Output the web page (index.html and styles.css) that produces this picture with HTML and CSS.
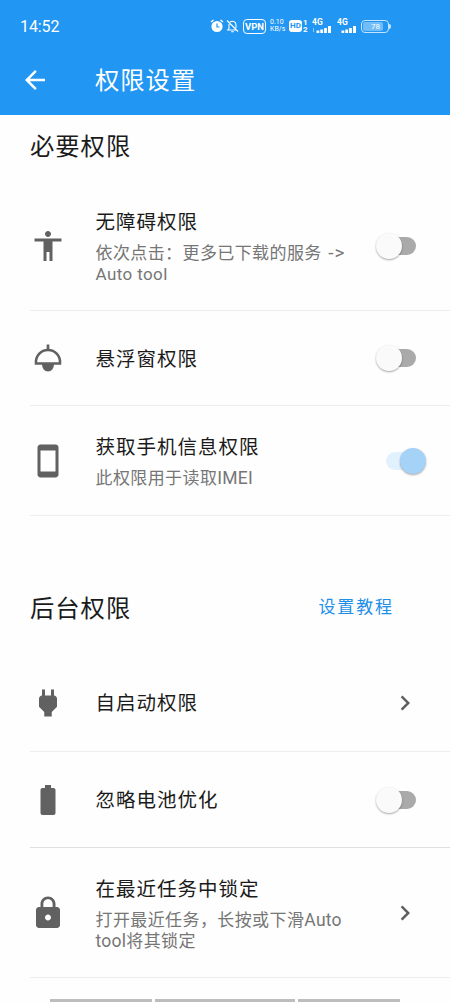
FILE: index.html
```html
<!DOCTYPE html>
<html lang="zh-CN">
<head>
<meta charset="utf-8">
<title>权限设置</title>
<link rel="stylesheet" href="styles.css">
</head>
<body>
<header class="header">
  <div class="status">
    <span class="clock">14:52</span>
    <div class="indicators">
      <svg class="alarm" width="14" height="14" viewBox="0 0 14 14"><circle cx="7" cy="7.500" r="5.600" fill="#fff"/><path d="M1 3 3.500 1M13 3 10.500 1" stroke="#fff" stroke-width="1.400"/><path d="M7 4.500v3.500h2.600" fill="none" stroke="#2196f3" stroke-width="1.200"/></svg>
      <svg class="mute" width="13" height="14" viewBox="0 0 13 14" fill="none" stroke="#fff" stroke-width="1.100"><path d="M4 3.200C6 1.300 10 2.500 10 6v3M3 5v4.500L1.800 11h8.400M5.200 12.700h2.600M1 1.500l11 11"/></svg>
      <span class="vpn">VPN</span>
      <span class="speed"><span>0.10</span><span>KB/s</span></span>
      <span class="hd">HD</span>
      <span class="sims"><span>1</span><span>2</span></span>
      <span class="signal"><span class="gen">4G</span><svg width="20" height="8" viewBox="0 0 20 8" fill="#fff"><path d="M4.500 5.500h2.800V8H4.500zM8.300 4.500h2.800V8H8.300zM12.100 3h2.800v5h-2.800zM16 1h3v7H16z"/><path d="M1.500 3v4" stroke="#8ac8f9"/></svg></span>
      <span class="signal second"><span class="gen">4G</span><svg width="20" height="8" viewBox="0 0 20 8" fill="#fff"><path d="M4.500 5.500h2.800V8H4.500zM8.300 4.500h2.800V8H8.300zM12.100 3h2.800v5h-2.800zM16 1h3v7H16z"/></svg></span>
      <span class="battery"><span class="charge">78</span></span><i class="tip"></i>
    </div>
  </div>
  <div class="appbar">
    <svg class="back" width="30" height="30" viewBox="0 0 24 24" fill="#fff"><path d="M20 11H7.830l5.590-5.590L12 4l-8 8 8 8 1.410-1.410L7.830 13H20v-2z"/></svg>
    <h1 class="heading">权限设置</h1>
  </div>
</header>
<main>
  <section class="required">
    <div class="section-head"><h2 class="heading">必要权限</h2></div>
    <div class="row r1">
      <svg class="icon" viewBox="0 0 24 24"><path d="M12 2c1.100 0 2 .9 2 2s-.9 2-2 2-2-.9-2-2 .9-2 2-2zm9 7h-6v13h-2v-6h-2v6H9V9H3V7h18v2z"/></svg>
      <div class="copy"><div class="title">无障碍权限</div><div class="sub">依次点击：更多已下载的服务 <span class="arrow">-&gt;</span><br>Auto tool</div></div>
      <span class="switch"><i class="knob"></i></span>
    </div>
    <div class="row r2">
      <svg class="icon" viewBox="0 0 24 24"><path d="M11.100 3h1.800v3.200h-1.800z"/><path d="M4 15.600C3.600 10.500 7.200 6.600 12 6.600s8.400 3.900 8 9z" fill="none" stroke="#616161" stroke-width="1.700"/><path d="M8 16h8c0 3-1.700 5-4 5s-4-2-4-5z"/></svg>
      <div class="copy"><div class="title">悬浮窗权限</div></div>
      <span class="switch"><i class="knob"></i></span>
    </div>
    <div class="row r3">
      <svg class="icon" viewBox="0 0 24 24"><path d="M17 1.010 7 1c-1.100 0-2 .9-2 2v18c0 1.100.9 2 2 2h10c1.100 0 2-.9 2-2V3c0-1.100-.9-1.990-2-1.990zM17 19H7V5h10v14z"/></svg>
      <div class="copy"><div class="title">获取手机信息权限</div><div class="sub">此权限用于读取<span class="latin">IMEI</span></div></div>
      <span class="switch on"><i class="knob"></i></span>
    </div>
  </section>
  <section class="background">
    <div class="section-head tall"><h2 class="heading">后台权限</h2><a class="guide">设置教程</a></div>
    <div class="row r4">
      <svg class="icon" viewBox="0 0 24 24"><path d="M16.010 7 16 3h-2v4h-4V3H8v4h-.01C7 6.990 6 7.990 6 8.990v5.490L9.500 18v3h5v-3l3.500-3.510v-5.500c0-1-1-2-1.990-1.990z"/></svg>
      <div class="copy"><div class="title">自启动权限</div></div>
      <svg class="chevron" viewBox="0 0 24 24"><path d="M10 6 8.590 7.410 13.170 12l-4.580 4.590L10 18l6-6z"/></svg>
    </div>
    <div class="row r5">
      <svg class="icon" viewBox="0 0 24 24"><path d="M15.670 4H14V2h-4v2H8.330C7.600 4 7 4.600 7 5.330v15.330C7 21.400 7.600 22 8.330 22h7.330c.74 0 1.340-.6 1.340-1.330V5.330C17 4.600 16.400 4 15.670 4z"/></svg>
      <div class="copy"><div class="title">忽略电池优化</div></div>
      <span class="switch"><i class="knob"></i></span>
    </div>
    <div class="row r6">
      <svg class="icon" viewBox="0 0 24 24"><path d="M18 8h-1V6c0-2.760-2.240-5-5-5S7 3.240 7 6v2H6c-1.100 0-2 .9-2 2v10c0 1.100.9 2 2 2h12c1.100 0 2-.9 2-2V10c0-1.100-.9-2-2-2zm-6 9c-1.100 0-2-.9-2-2s.9-2 2-2 2 .9 2 2-.9 2-2 2zm3.100-9H8.900V6c0-1.710 1.390-3.100 3.100-3.100s3.100 1.390 3.100 3.100v2z"/></svg>
      <div class="copy"><div class="title">在最近任务中锁定</div><div class="sub">打开最近任务，长按或下滑<span class="latin">Auto</span><br><span class="latin">tool</span>将其锁定</div></div>
      <svg class="chevron" viewBox="0 0 24 24"><path d="M10 6 8.590 7.410 13.170 12l-4.580 4.590L10 18l6-6z"/></svg>
    </div>
  </section>
</main>
<footer class="gesture"><i></i><i></i><i></i></footer>
</body>
</html>
```

FILE: styles.css
```css
* { box-sizing: border-box; }
body {
  margin: 0;
  width: 450px;
  height: 1003px;
  overflow: hidden;
  background: #fefefe;
  color: #1b1b1b;
  font-family: Roboto, "Noto Sans CJK SC", sans-serif;
  display: flex;
  flex-direction: column;
}
.header { height: 115px; flex: none; background: #2196f3; color: #fff; }
.status { height: 50px; padding: 2px 59px 0 20px; display: flex; align-items: center; justify-content: space-between; }
.clock { font-size: 16px; letter-spacing: -.1px; }
.indicators { display: flex; align-items: center; height: 18px; }
.alarm { margin-right: 2px; }
.mute { margin-right: 4px; }
.vpn { width: 23px; height: 15px; border: 1.500px solid #fff; border-radius: 4px; font: bold 9.500px/13px Roboto, sans-serif; display: flex; justify-content: center; }
.speed { width: 16px; margin-left: 4px; display: flex; flex-direction: column; font-size: 7px; line-height: 7px; white-space: nowrap; }
.hd { width: 13px; height: 12px; margin-left: 3px; border-radius: 3px; background: #fff; color: #2196f3; font-weight: bold; font-size: 8px; line-height: 12px; text-align: center; }
.sims { width: 5px; display: flex; flex-direction: column; font-weight: bold; font-size: 8px; line-height: 7px; margin-left: 1px; }
.signal { width: 20px; height: 16px; margin-left: 4px; display: flex; flex-direction: column; }
.gen { height: 7px; font-weight: bold; font-size: 8.500px; line-height: 8px; }
.second { margin-left: 5px; }
.battery { width: 28px; height: 13px; margin-left: 4px; padding: 1px; border: 1px solid #c5e4fc; border-radius: 4px; }
.charge { display: block; width: 20px; height: 9px; background: #72bcf7; border-radius: 2px; font-size: 8px; line-height: 9px; padding-left: 8px; }
.tip { width: 2px; height: 5px; background: #c5e4fc; border-radius: 0 2px 2px 0; }
.appbar { height: 60px; padding-left: 20px; display: flex; align-items: center; }
.back { margin-right: 45px; }
.heading { margin: 0; padding-top: 2px; font-size: 24.300px; font-weight: 400; line-height: 36px; letter-spacing: 1px; }
.section-head { height: 66px; padding: 12px 56px 0 30px; display: flex; align-items: flex-start; justify-content: space-between; }
.section-head.tall { height: 139px; padding-top: 73px; }
.guide { color: #1e8fe8; font-size: 17px; letter-spacing: 1.900px; line-height: 36px; }
.row { margin-left: 30px; border-bottom: 1px solid #ededed; display: flex; align-items: center; }
.r1 { height: 129px; margin-top: 0; }
.r2 { height: 95px; }
.r3 { height: 111px; }
.r4 { height: 97px; }
.r5 { height: 96px; border-color: #e0e0e0; }
.r6 { height: 130px; }
.required .section-head { height: 67px; }
.required .r3 { height: 110px; }
.icon { width: 36px; height: 36px; margin: 0 30px 0 -.5px; fill: #616161; flex: none; }
.copy { flex: 1; white-space: nowrap; padding-top: 2px; }
.r2 .copy { padding-top: 4px; }
.title { font-size: 19.500px; line-height: 28px; letter-spacing: 1px; }
.sub { font-size: 17px; line-height: 21px; letter-spacing: .4px; color: #767676; padding-top: 6px; }
.arrow { font-size: 19px; line-height: 1px; letter-spacing: 1px; margin-left: 2px; }
.latin { font-size: 17.500px; line-height: 1px; letter-spacing: .25px; }
.switch { position: relative; width: 40px; height: 26px; margin-right: 34px; display: flex; align-items: center; }
.switch::before { content: ""; width: 36px; height: 18px; margin-left: 4px; border-radius: 9px; background: #aaa; }
.knob { position: absolute; left: 0; top: 0; width: 26px; height: 26px; border-radius: 50%; background: #fafafa; box-shadow: 0 1px 2px rgba(0, 0, 0, .35); }
.switch.on { margin-right: 24px; }
.switch.on::before { margin-left: 0; background: #e2f1fe; }
.switch.on .knob { left: 14px; background: #a5d3f8; }
.chevron { width: 30px; height: 30px; margin-right: 30px; fill: #5f5f5f; }
.gesture { flex: 1; padding: 21px 50px 0; display: flex; gap: 3px; }
.gesture i { width: 102px; height: 3px; background: #bdbdbd; }
.gesture i:nth-child(2) { width: 140px; }
```
